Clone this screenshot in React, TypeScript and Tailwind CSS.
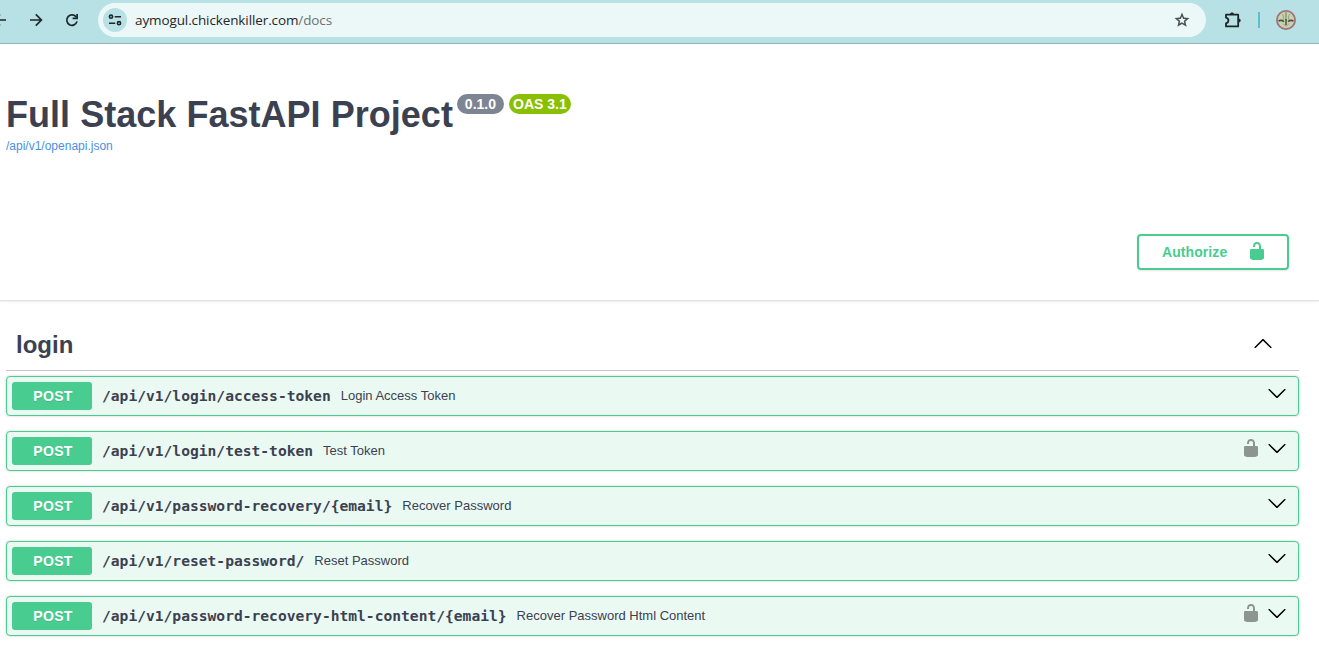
const ARROW =
  'M17.418 6.109c.272-.268.709-.268.979 0s.271.701 0 .969l-7.908 7.83c-.27.268-.707.268-.979 0l-7.908-7.83c-.27-.268-.27-.701 0-.969.271-.268.709-.268.979 0L10 13.25l7.418-7.141z';
const LOCK =
  'M15.8 8H14V5.6C14 2.703 12.665 1 10 1 7.334 1 6 2.703 6 5.6V6h2v-.801C8 3.754 8.797 3 10 3c1.203 0 2 .754 2 2.199V8H4c-.553 0-1 .646-1 1.199V17c0 .549.428 1.139.951 1.307l1.197.387C5.672 18.861 6.55 19 7.1 19h5.8c.549 0 1.428-.139 1.951-.307l1.196-.387c.524-.167.953-.757.953-1.306V9.199C17 8.646 16.352 8 15.8 8z';

type Operation = { path: string; summary: string; secured?: boolean };

const operations: Operation[] = [
  { path: '/api/v1/login/access-token', summary: 'Login Access Token' },
  { path: '/api/v1/login/test-token', summary: 'Test Token', secured: true },
  { path: '/api/v1/password-recovery/{email}', summary: 'Recover Password' },
  { path: '/api/v1/reset-password/', summary: 'Reset Password' },
  { path: '/api/v1/password-recovery-html-content/{email}', summary: 'Recover Password Html Content', secured: true },
];

function Icon({ d, className = '' }: { d: string; className?: string }) {
  return (
    <svg viewBox="0 0 20 20" className={`size-5 shrink-0 fill-current ${className}`}>
      <path d={d} />
    </svg>
  );
}

function Toolbar() {
  return (
    <header className="flex h-11 items-start overflow-hidden border-b border-[#95b2b5] bg-[#b7e1e4] text-[#1f2628]">
      <div className="flex h-10 w-[98px] shrink-0 items-center">
        <svg viewBox="0 0 98 40" className="h-10 w-[98px]" fill="none" stroke="currentColor" strokeWidth="1.7">
          <path d="M-6 20H6M0 14.5L-5.5 20L0 25.5" />
          <path d="M30 20H41M35.8 14.4L41.4 20L35.8 25.6" />
          <path d="M76.3 17.2A5.2 5.2 0 1 0 77 21.4" />
          <path d="M77.1 14V18.3H72.6" />
        </svg>
      </div>
      <div className="mt-[3px] flex h-[34px] w-[1108px] shrink-0 items-center rounded-full bg-[#ecf8f8] pl-[5px] pr-[15px]">
        <span className="flex size-6 items-center justify-center rounded-full bg-[#b7e1e4]">
          <svg viewBox="0 0 14 14" className="size-3.5" fill="none" stroke="currentColor" strokeWidth="1.6">
            <circle cx="3" cy="3.7" r="1.6" />
            <path d="M6.7 3.7H13M1 10.2H7.2" />
            <circle cx="11" cy="10.2" r="1.6" />
          </svg>
        </span>
        <span className="ml-2 font-['Open_Sans','Noto_Sans',sans-serif] text-[13.5px] leading-5 tracking-[-0.11px] text-[#1f2628]">
          aymogul.chickenkiller.com<span className="text-[#687374]">/docs</span>
        </span>
        <svg viewBox="0 0 24 24" className="ml-auto size-[18px] text-[#4a5152]" fill="currentColor">
          <path d="m8.85 16.83 3.15-1.9 3.15 1.93-.83-3.6 2.78-2.4-3.65-.33L12 7.13l-1.45 3.38-3.65.32 2.78 2.43zM5.83 21l1.62-7.03L2 9.25l7.2-.63L12 2l2.8 6.63 7.2.62-5.45 4.73L18.18 21 12 17.28z" />
        </svg>
      </div>
      <div className="flex h-10 grow items-center">
        <svg viewBox="0 0 18 18" className="ml-[18px] size-[18px]" fill="none" stroke="currentColor" strokeWidth="1.8" strokeLinejoin="round">
          <path d="M2 3.7H14.2V15.4H2V12.3Q4.4 11.8 4.4 9.5Q4.4 7.2 2 6.7Z" />
          <path d="M6.3 3.4Q6.3 1.7 8 1.7Q9.7 1.7 9.7 3.4ZM14.4 7.8Q16.4 7.8 16.4 9.5Q16.4 11.2 14.4 11.2Z" fill="currentColor" strokeWidth=".7" />
        </svg>
        <span className="ml-4 h-4 w-0.5 bg-[#5fbfc8]" />
        <svg viewBox="0 0 20 20" className="ml-4 size-5" fill="none">
          <circle cx="10" cy="10" r="9.1" fill="#c9d3b0" stroke="#a0737a" strokeWidth="1.8" />
          <path d="M10 2V10" stroke="#7d8a6d" strokeWidth="1.2" />
          <path d="M6.5 4Q8.2 7 7.2 10M13.5 4Q11.8 7 12.8 10M7 13.5Q10 18.5 13 13.5" stroke="#98a486" />
          <path d="M10 9V15M2.5 11.2Q5 9.4 8 11.6M12 11.6Q15 9.4 17.5 11.2" stroke="#46513f" strokeWidth="1.5" />
        </svg>
      </div>
    </header>
  );
}

function OperationRow({ path, summary, secured }: Operation) {
  return (
    <div className="flex h-10 items-center rounded border border-[#49cc90] bg-[#ebf9f3] pl-[5px] pr-[11px] shadow-[0_0_3px_rgba(0,0,0,0.19)]">
      <span className="flex h-7 w-20 shrink-0 items-center justify-center rounded-[3px] bg-[#49cc90] pl-0.5 text-sm font-bold tracking-[0.3px] text-white [text-shadow:0_1px_0_rgba(0,0,0,0.1)]">
        POST
      </span>
      <span className="ml-2.5 font-['DejaVu_Sans_Mono',monospace] text-[14.61px] leading-5 font-bold">{path}</span>
      <span className="ml-2.5 text-[13px] leading-5">{summary}</span>
      <span className="ml-auto flex items-center gap-[6px] pb-[6px]">
        {secured && <Icon d={LOCK} className="text-[#8d9591]" />}
        <Icon d={ARROW} className="text-black" />
      </span>
    </div>
  );
}

export default function App() {
  return (
    <div className="h-[665px] overflow-hidden bg-white font-['Liberation_Sans',Arial,sans-serif] text-[#3b4151]">
      <Toolbar />
      <section className="h-[190px] px-1.5 pt-[49px]">
        <div className="flex items-start">
          <h1 className="pt-px text-4xl leading-[42px] font-bold tracking-[0.03px] whitespace-nowrap">Full Stack FastAPI Project</h1>
          <div className="mt-px ml-1 flex gap-[5px] text-sm leading-5 font-bold text-white">
            <span className="h-5 w-[47px] rounded-full bg-[#7d8492] text-center">0.1.0</span>
            <span className="h-5 w-[62px] rounded-full bg-[#89bf04] text-center whitespace-nowrap">OAS 3.1</span>
          </div>
        </div>
        <a className="block pt-px text-xs leading-[18px] text-[#4990e2]">/api/v1/openapi.json</a>
      </section>
      <section className="flex h-[67px] items-start justify-end border-b border-[#e2e2e2] pr-[30px] shadow-[0_1px_2px_rgba(0,0,0,0.08)]">
        <button className="flex h-9 w-[152px] items-center justify-between rounded border-2 border-[#49cc90] pr-5 pl-[23px] text-sm font-bold tracking-[0.08px] text-[#49cc90] shadow-[0_1px_2px_rgba(0,0,0,0.1)]">
          Authorize
          <Icon d={LOCK} className="mb-0.5" />
        </button>
      </section>
      <main className="pt-[19px] pr-5 pl-1.5">
        <div className="flex h-[51px] items-center justify-between border-b border-[#c4c6cb] pr-[26px] pl-2.5">
          <h2 className="text-2xl leading-8 font-bold">login</h2>
          <Icon d={ARROW} className="mb-0.5 rotate-180 text-black" />
        </div>
        <div className="flex flex-col gap-[15px] pt-[5px]">
          {operations.map((operation) => (
            <OperationRow key={operation.path} {...operation} />
          ))}
        </div>
      </main>
    </div>
  );
}
